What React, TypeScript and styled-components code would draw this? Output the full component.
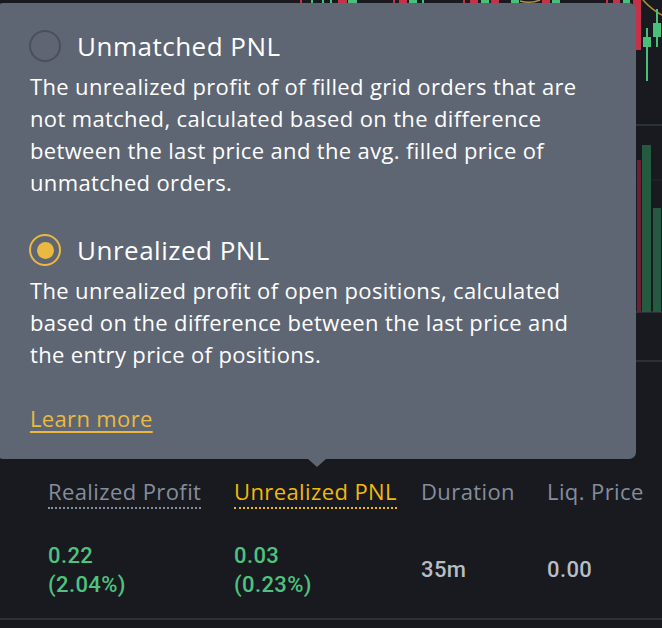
import React from 'react';
import styled, { createGlobalStyle } from 'styled-components';

const GlobalStyle = createGlobalStyle`
  html, body {
    margin: 0;
    padding: 0;
    background: #181a20;
  }
  body {
    font-family: "Open Sans", "Liberation Sans", sans-serif;
  }
`;

const Page = styled.div`
  position: relative;
  width: 662px;
  height: 628px;
  overflow: hidden;
  background: #181a20;
`;

const ChartPane = styled.svg`
  display: block;
  width: 662px;
  height: 362px;
`;

const Table = styled.div`
  padding: 107px 0 0 48px;
`;

const Row = styled.div`
  display: grid;
  grid-template-columns: 186px 187px 126px 1fr;
  align-items: center;
`;

const HeadRow = styled(Row)`
  height: 44px;
`;

const ValueRow = styled(Row)`
  height: 107px;
  padding-top: 8px;
  box-sizing: border-box;
  border-bottom: 2px solid #2b3139;
  margin-left: -48px;
  padding-left: 48px;
`;

const HeadCell = styled.div<{ $active?: boolean; $hint?: boolean }>`
  font-size: 22px;
  letter-spacing: 0.4px;
  line-height: 26px;
  color: ${({ $active }) => ($active ? '#f0b90b' : '#848e9c')};
  white-space: nowrap;
  span {
    border-bottom: ${({ $hint, $active }) =>
      $hint ? `2px dotted ${$active ? '#f0b90b' : '#848e9c'}` : 'none'};
    padding-bottom: 1px;
  }
`;

const ValueCell = styled.div<{ $up?: boolean }>`
  font-family: Roboto, "Liberation Sans", sans-serif;
  font-size: 22px;
  font-weight: 500;
  letter-spacing: 0.4px;
  line-height: 29px;
  color: ${({ $up }) => ($up ? '#4fc27f' : '#b7bdc6')};
  white-space: pre-line;
`;

const Tooltip = styled.div`
  position: absolute;
  top: 3px;
  left: -4px;
  width: 640px;
  box-sizing: border-box;
  padding: 27px 0 25px 34px;
  background: #5e6673;
  border-radius: 7px;
  color: #ffffff;

  &::after {
    content: '';
    position: absolute;
    left: 312px;
    bottom: -8px;
    border-left: 9px solid transparent;
    border-right: 9px solid transparent;
    border-top: 8px solid #5e6673;
  }
`;

const Option = styled.div`
  & + & {
    margin-top: 36px;
  }
`;

const OptionHead = styled.div`
  display: flex;
  align-items: center;
  gap: 16px;
  height: 32px;
`;

const Radio = styled.span<{ $checked?: boolean }>`
  box-sizing: border-box;
  width: 32px;
  height: 32px;
  margin-left: -1px;
  border-radius: 50%;
  border: 2px solid ${({ $checked }) => ($checked ? '#ebb941' : '#4a505b')};
  display: flex;
  align-items: center;
  justify-content: center;

  &::before {
    content: '';
    width: 17px;
    height: 17px;
    border-radius: 50%;
    background: ${({ $checked }) => ($checked ? '#ebb941' : 'transparent')};
  }
`;

const OptionTitle = styled.div`
  font-size: 26px;
  letter-spacing: 0.5px;
  line-height: 32px;
`;

const OptionDesc = styled.div`
  margin-top: 8px;
  font-size: 22px;
  letter-spacing: 0.35px;
  line-height: 32px;
  white-space: pre-line;
`;

const LearnMore = styled.a`
  display: inline-block;
  margin-top: 32px;
  font-size: 22px;
  letter-spacing: 0.35px;
  line-height: 32px;
  color: #ebb941;
  text-decoration: underline;
  text-underline-offset: 4px;
  text-decoration-thickness: 2px;
`;

const topBits: [number, number, string][] = [
  [300, 2, '#c4324a'], [311, 2, '#48c07a'], [322, 2, '#48c07a'], [330, 2, '#48c07a'],
  [338, 9, '#c4324a'], [348, 9, '#48c07a'], [393, 2, '#c4324a'], [399, 8, '#c4324a'],
  [409, 8, '#48c07a'], [422, 2, '#48c07a'], [463, 2, '#c4324a'], [470, 8, '#c4324a'],
  [481, 8, '#48c07a'], [491, 8, '#c4324a'], [511, 8, '#48c07a'], [542, 8, '#c4324a'],
  [552, 8, '#48c07a'], [606, 2, '#c4324a'], [613, 7, '#c4324a'], [623, 7, '#48c07a'],
];

const Chart = () => (
  <ChartPane viewBox="0 0 662 362">
    <line x1="0" y1="125" x2="662" y2="125" stroke="#2b3139" strokeWidth="2" />
    <line x1="0" y1="180" x2="662" y2="180" stroke="#23272e" strokeWidth="1" />
    <line x1="0" y1="312" x2="662" y2="312" stroke="#2b3139" strokeWidth="2" />
    <line x1="0" y1="361" x2="662" y2="361" stroke="#2b3139" strokeWidth="2" />
    {topBits.map(([x, w, c]) => (
      <rect key={x} x={x} y={0} width={w} height={4} fill={c} />
    ))}
    <path d="M520 1 Q530 4 540 0" stroke="#b8913a" strokeWidth="1.5" fill="none" />
    <path d="M643 0 Q652 10 662 15" stroke="#b8913a" strokeWidth="1.5" fill="none" />
    <rect x="633" y="0" width="8" height="50" fill="#c4324a" />
    <line x1="647" y1="28" x2="647" y2="81" stroke="#48c07a" strokeWidth="2" />
    <rect x="643" y="37" width="8" height="10" fill="#48c07a" />
    <line x1="657" y1="9" x2="657" y2="47" stroke="#48c07a" strokeWidth="2" />
    <rect x="653" y="23" width="8" height="14" fill="#48c07a" />
    <rect x="637" y="160" width="4" height="152" fill="#6e1f33" />
    <rect x="642" y="145" width="9" height="167" fill="#235a40" />
    <rect x="653" y="208" width="8" height="104" fill="#235a40" />
  </ChartPane>
);

const App = () => (
  <Page>
    <GlobalStyle />
    <Chart />
    <Table>
      <HeadRow>
        <HeadCell $hint><span>Realized Profit</span></HeadCell>
        <HeadCell $hint $active><span>Unrealized PNL</span></HeadCell>
        <HeadCell>Duration</HeadCell>
        <HeadCell>Liq. Price</HeadCell>
      </HeadRow>
      <ValueRow>
        <ValueCell $up>{'0.22\n(2.04%)'}</ValueCell>
        <ValueCell $up>{'0.03\n(0.23%)'}</ValueCell>
        <ValueCell>35m</ValueCell>
        <ValueCell>0.00</ValueCell>
      </ValueRow>
    </Table>
    <Tooltip>
      <Option>
        <OptionHead>
          <Radio />
          <OptionTitle>Unmatched PNL</OptionTitle>
        </OptionHead>
        <OptionDesc>
          {'The unrealized profit of of filled grid orders that are\nnot matched, calculated based on the difference\nbetween the last price and the avg. filled price of\nunmatched orders.'}
        </OptionDesc>
      </Option>
      <Option>
        <OptionHead>
          <Radio $checked />
          <OptionTitle>Unrealized PNL</OptionTitle>
        </OptionHead>
        <OptionDesc>
          {'The unrealized profit of open positions, calculated\nbased on the difference between the last price and\nthe entry price of positions.'}
        </OptionDesc>
      </Option>
      <LearnMore>Learn more</LearnMore>
    </Tooltip>
  </Page>
);

export default App;
